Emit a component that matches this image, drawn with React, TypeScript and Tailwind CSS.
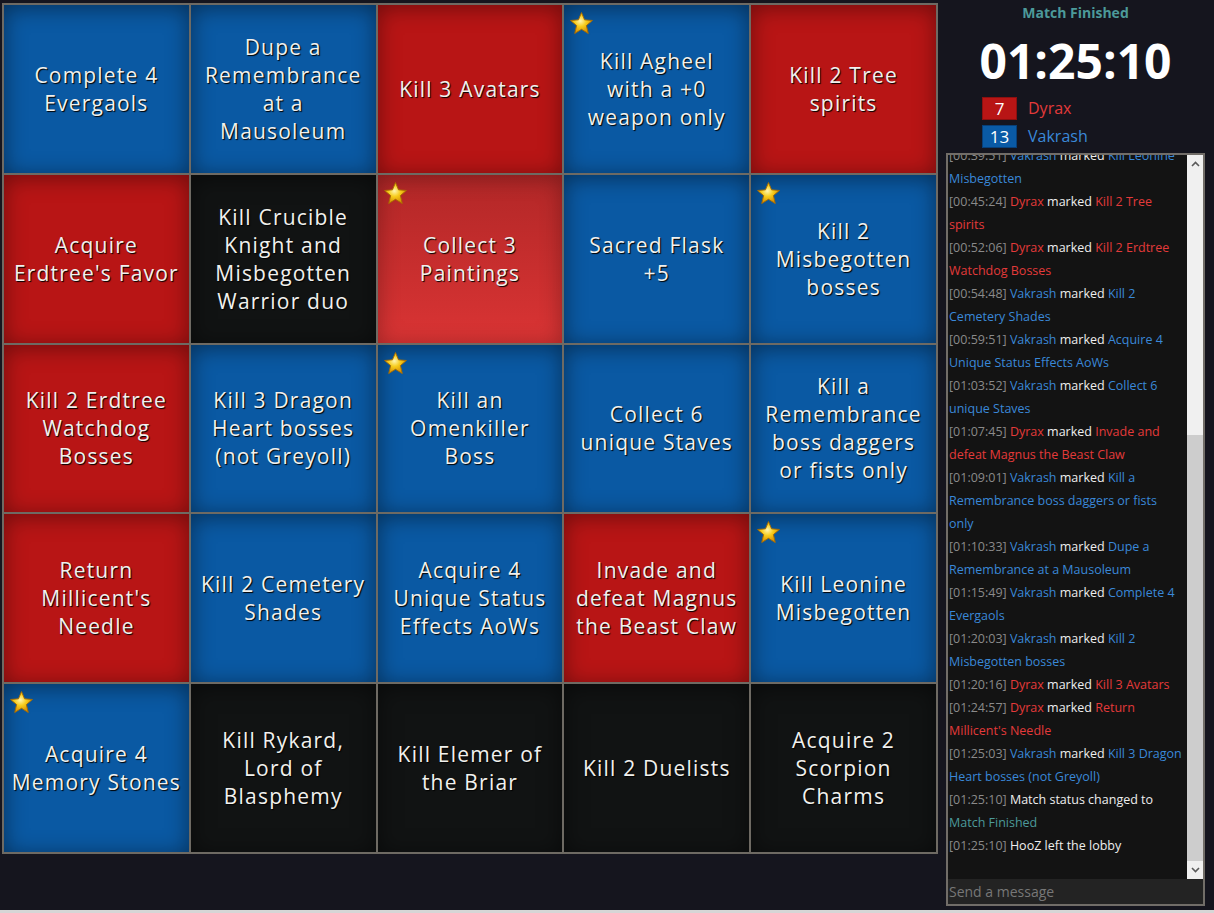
import { useId } from "react";

type Team = "red" | "blue" | "none" | "hover";

const board: { lines: string[]; team: Team; star?: boolean }[] = [
  { lines: ["Complete 4", "Evergaols"], team: "blue" },
  { lines: ["Dupe a", "Remembrance", "at a", "Mausoleum"], team: "blue" },
  { lines: ["Kill 3 Avatars"], team: "red" },
  { lines: ["Kill Agheel", "with a +0", "weapon only"], team: "blue", star: true },
  { lines: ["Kill 2 Tree", "spirits"], team: "red" },

  { lines: ["Acquire", "Erdtree's Favor"], team: "red" },
  { lines: ["Kill Crucible", "Knight and", "Misbegotten", "Warrior duo"], team: "none" },
  { lines: ["Collect 3", "Paintings"], team: "hover", star: true },
  { lines: ["Sacred Flask", "+5"], team: "blue" },
  { lines: ["Kill 2", "Misbegotten", "bosses"], team: "blue", star: true },

  { lines: ["Kill 2 Erdtree", "Watchdog", "Bosses"], team: "red" },
  { lines: ["Kill 3 Dragon", "Heart bosses", "(not Greyoll)"], team: "blue" },
  { lines: ["Kill an", "Omenkiller", "Boss"], team: "blue", star: true },
  { lines: ["Collect 6", "unique Staves"], team: "blue" },
  { lines: ["Kill a", "Remembrance", "boss daggers", "or fists only"], team: "blue" },

  { lines: ["Return", "Millicent's", "Needle"], team: "red" },
  { lines: ["Kill 2 Cemetery", "Shades"], team: "blue" },
  { lines: ["Acquire 4", "Unique Status", "Effects AoWs"], team: "blue" },
  { lines: ["Invade and", "defeat Magnus", "the Beast Claw"], team: "red" },
  { lines: ["Kill Leonine", "Misbegotten"], team: "blue", star: true },

  { lines: ["Acquire 4", "Memory Stones"], team: "blue", star: true },
  { lines: ["Kill Rykard,", "Lord of", "Blasphemy"], team: "none" },
  { lines: ["Kill Elemer of", "the Briar"], team: "none" },
  { lines: ["Kill 2 Duelists"], team: "none" },
  { lines: ["Acquire 2", "Scorpion", "Charms"], team: "none" },
];

const cellColors: Record<Team, string> = {
  blue: "bg-[#0a59a3] shadow-[inset_0_3px_22px_rgba(0,0,0,0.45)]",
  red: "bg-[#b81515] shadow-[inset_0_3px_22px_rgba(0,0,0,0.4)]",
  none: "bg-[#111313] shadow-[inset_0_3px_22px_rgba(0,0,0,0.5)]",
  hover: "bg-gradient-to-b from-[#b22727] to-[#da3434] shadow-[inset_0_3px_22px_rgba(0,0,0,0.3)]",
};

type Msg = { t: string; who?: "Dyrax" | "Vakrash"; goal?: string; text?: string; status?: string };

const chat: Msg[] = [
  { t: "00:12:40", who: "Vakrash", goal: "Acquire 4 Memory Stones" },
  { t: "00:18:05", who: "Dyrax", goal: "Acquire Erdtree's Favor" },
  { t: "00:24:31", who: "Vakrash", goal: "Sacred Flask +5" },
  { t: "00:31:17", who: "Vakrash", goal: "Kill Agheel with a +0 weapon only" },
  { t: "00:36:02", who: "Vakrash", goal: "Kill an Omenkiller Boss" },
  { t: "00:39:51", who: "Vakrash", goal: "Kill Leonine Misbegotten" },
  { t: "00:45:24", who: "Dyrax", goal: "Kill 2 Tree spirits" },
  { t: "00:52:06", who: "Dyrax", goal: "Kill 2 Erdtree Watchdog Bosses" },
  { t: "00:54:48", who: "Vakrash", goal: "Kill 2 Cemetery Shades" },
  { t: "00:59:51", who: "Vakrash", goal: "Acquire 4 Unique Status Effects AoWs" },
  { t: "01:03:52", who: "Vakrash", goal: "Collect 6 unique Staves" },
  { t: "01:07:45", who: "Dyrax", goal: "Invade and defeat Magnus the Beast Claw" },
  { t: "01:09:01", who: "Vakrash", goal: "Kill a Remembrance boss daggers or fists only" },
  { t: "01:10:33", who: "Vakrash", goal: "Dupe a Remembrance at a Mausoleum" },
  { t: "01:15:49", who: "Vakrash", goal: "Complete 4 Evergaols" },
  { t: "01:20:03", who: "Vakrash", goal: "Kill 2 Misbegotten bosses" },
  { t: "01:20:16", who: "Dyrax", goal: "Kill 3 Avatars" },
  { t: "01:24:57", who: "Dyrax", goal: "Return Millicent's Needle" },
  { t: "01:25:03", who: "Vakrash", goal: "Kill 3 Dragon Heart bosses (not Greyoll)" },
  { t: "01:25:10", text: "Match status changed to ", status: "Match Finished" },
  { t: "01:25:10", text: "HooZ left the lobby" },
];

const Star = () => {
  const id = useId();
  return (
    <svg width="25" height="25" viewBox="0 0 24 24" className="absolute left-[5px] top-[6px]">
      <defs>
        <radialGradient id={id} cx="45%" cy="40%" r="60%">
          <stop offset="0%" stopColor="#fff6b0" />
          <stop offset="45%" stopColor="#f7cc1c" />
          <stop offset="100%" stopColor="#d48a00" />
        </radialGradient>
      </defs>
      <polygon
        points="12,1.5 14.9,8.5 22.5,9.1 16.7,14 18.5,21.6 12,17.6 5.5,21.6 7.3,14 1.5,9.1 9.1,8.5"
        fill={`url(#${id})`}
        stroke="#a86b00"
        strokeWidth="0.9"
        strokeLinejoin="round"
      />
    </svg>
  );
};

const Chevron = ({ down }: { down?: boolean }) => (
  <svg width="9" height="6" viewBox="0 0 9 6">
    <path d={down ? "M1 1 L4.5 4.5 L8 1" : "M1 5 L4.5 1.5 L8 5"} fill="none" stroke="#5a5a5a" strokeWidth="1.6" />
  </svg>
);

const teamText = (who?: string) => (who === "Dyrax" ? "text-[#e33a3a]" : "text-[#3a88d8]");

export default function App() {
  return (
    <div className="h-[913px] w-full bg-[#15151e] flex flex-col overflow-hidden">
      <div className="flex h-[910px]">
        {/* board */}
        <div className="pl-[2px] pt-[3px]">
          <div className="grid grid-cols-5 grid-rows-5 gap-[2px] p-[2px] bg-[#6e6a63] w-[936px] h-[851px]">
            {board.map((cell, i) => (
              <div
                key={i}
                className={`relative flex flex-col items-center justify-center px-[4px] text-center ${cellColors[cell.team]}`}
              >
                {cell.star && <Star />}
                {cell.lines.map((line, j) => (
                  <span
                    key={j}
                    className="block whitespace-nowrap font-['Open_Sans',sans-serif] text-[21px] leading-[28px] tracking-[1.2px] text-[#f1f1ee] [text-shadow:1px_1px_1px_#000]"
                  >
                    {line}
                  </span>
                ))}
              </div>
            ))}
          </div>
        </div>

        {/* sidebar */}
        <div className="ml-[8px] w-[259px] flex flex-col font-['Open_Sans',sans-serif]">
          <div className="pt-[3px] text-center text-[14px] leading-[20px] font-bold text-[#4c9a9a]">Match Finished</div>
          <div className="mt-[14px] text-center text-[48px] leading-[48px] font-bold text-white">01:25:10</div>
          <div className="mt-[11px] pl-[36px] flex flex-col gap-[4px]">
            <div className="flex items-center gap-[11px]">
              <div className="w-[35px] h-[23px] bg-[#b81515] border border-[#8c1010] flex items-center justify-center text-white text-[17px] leading-none">
                7
              </div>
              <span className="text-[16px] text-[#e33a3a]">Dyrax</span>
            </div>
            <div className="flex items-center gap-[11px]">
              <div className="w-[35px] h-[23px] bg-[#0a5aa5] border border-[#083f78] flex items-center justify-center text-white text-[17px] leading-none">
                13
              </div>
              <span className="text-[16px] text-[#3a88d8]">Vakrash</span>
            </div>
          </div>

          {/* chat */}
          <div className="mt-[5px] h-[753px] border-2 border-[#716d68] flex flex-col">
            <div className="flex flex-1 min-h-0">
              <div className="flex-1 min-w-0 overflow-hidden bg-[#131313] flex flex-col justify-end pl-[1px] pr-[4px] pb-[22px]">
                {chat.map((m, i) => (
                  <div key={i} className="text-[12.5px] leading-[23px] text-[#eeeeee]">
                    <span className="text-[#8a8a8a]">[{m.t}]</span>{" "}
                    {m.who ? (
                      <>
                        <span className={teamText(m.who)}>{m.who}</span> marked{" "}
                        <span className={teamText(m.who)}>{m.goal}</span>
                      </>
                    ) : (
                      <>
                        {m.text}
                        {m.status && <span className="text-[#4c9a9a]">{m.status}</span>}
                      </>
                    )}
                  </div>
                ))}
              </div>
              <div className="w-[16px] bg-[#f0f0f0] flex flex-col">
                <div className="h-[17px] flex items-center justify-center">
                  <Chevron />
                </div>
                <div className="flex-1 flex flex-col justify-end">
                  <div className="h-[426px] bg-[#cdcdcd]" />
                </div>
                <div className="h-[18px] flex items-center justify-center">
                  <Chevron down />
                </div>
              </div>
            </div>
            <input
              placeholder="Send a message"
              className="h-[25px] bg-[#232323] px-[1px] text-[14px] text-[#ddd] placeholder:text-[#777] outline-none"
            />
          </div>
        </div>
      </div>
      <div className="h-[3px] bg-[#d6d6d6]" />
    </div>
  );
}
